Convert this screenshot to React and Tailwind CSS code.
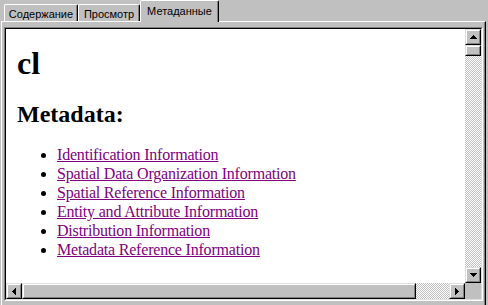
import React from "react";

const Raised = ({ className = "", children }) => (
  <div className={`border border-t-[#dfdfdf] border-l-[#dfdfdf] border-r-black border-b-black ${className}`}>
    <div className="w-full h-full border border-t-white border-l-white border-r-[#808080] border-b-[#808080] bg-[#c0c0c0] flex items-center justify-center">
      {children}
    </div>
  </div>
);

const ArrowUp = () => (
  <svg width="7" height="4" viewBox="0 0 7 4" shapeRendering="crispEdges">
    <path d="M3 0h1v1H3z M2 1h3v1H2z M1 2h5v1H1z M0 3h7v1H0z" fill="#000" />
  </svg>
);
const ArrowDown = () => (
  <svg width="7" height="4" viewBox="0 0 7 4" shapeRendering="crispEdges">
    <path d="M0 0h7v1H0z M1 1h5v1H1z M2 2h3v1H2z M3 3h1v1H3z" fill="#000" />
  </svg>
);
const ArrowLeft = () => (
  <svg width="4" height="7" viewBox="0 0 4 7" shapeRendering="crispEdges">
    <path d="M0 3h1v1H0z M1 2h1v3H1z M2 1h1v5H2z M3 0h1v7H3z" fill="#000" />
  </svg>
);
const ArrowRight = () => (
  <svg width="4" height="7" viewBox="0 0 4 7" shapeRendering="crispEdges">
    <path d="M0 0h1v7H0z M1 1h1v5H1z M2 2h1v3H2z M3 3h1v1H3z" fill="#000" />
  </svg>
);

const links = [
  "Identification Information",
  "Spatial Data Organization Information",
  "Spatial Reference Information",
  "Entity and Attribute Information",
  "Distribution Information",
  "Metadata Reference Information",
];

export default function App() {
  return (
    <div className="w-[488px] h-[305px] bg-[#c0c0c0] overflow-hidden flex flex-col pl-[1px] font-['Liberation_Sans',Arial,sans-serif] text-[11px] leading-[13px] text-black">
      {/* Tabs */}
      <div className="h-[21px] flex items-end pl-[3px] shrink-0">
        <div className="w-[74px] h-[17px] border-t border-l border-t-white border-l-white border-r border-r-black shadow-[inset_-1px_0_#808080] rounded-tl-[2px] rounded-tr-[2px] flex justify-center pt-[3px]">
          Содержание
        </div>
        <div className="w-[62px] h-[17px] border-t border-l border-t-white border-l-white border-r border-r-black shadow-[inset_-1px_0_#808080] rounded-tl-[2px] rounded-tr-[2px] flex justify-center pt-[3px]">
          Просмотр
        </div>
        <div className="relative z-10 w-[79px] h-[22px] -mb-[1px] bg-[#c0c0c0] border-t border-l border-t-white border-l-white border-r border-r-black shadow-[inset_-1px_0_#808080] rounded-tl-[2px] rounded-tr-[2px] flex justify-center pt-[4px]">
          Метаданные
        </div>
      </div>

      {/* Panel */}
      <div className="w-[485px] flex-1 border-t border-l border-white border-r border-r-black shadow-[inset_-1px_0_#808080] pt-[5px] pl-[2px]">
        {/* Sunken frame */}
        <div className="w-[479px] h-[274px] border border-t-[#808080] border-l-[#808080] border-r-white border-b-white">
          <div className="w-full h-full border border-t-black border-l-black border-r-[#dfdfdf] border-b-[#dfdfdf] flex flex-col">
            <div className="flex flex-1 min-h-0">
              {/* White content */}
              <div className="flex-1 bg-white pl-[11px] pt-[16px] font-['Liberation_Serif','Times_New_Roman',serif] overflow-hidden">
                <h1 className="text-[32px] leading-[37px] font-bold">cl</h1>
                <h2 className="text-[24px] leading-[28px] font-bold mt-[18px]">Metadata:</h2>
                <ul className="mt-[17px] text-[16px] leading-[19px]">
                  {links.map((t) => (
                    <li key={t} className="flex items-center">
                      <span className="w-[24px] shrink-0"></span>
                      <span className="w-[5px] h-[5px] rounded-full bg-black shrink-0 mt-[2px]"></span>
                      <span className="w-[11px] shrink-0"></span>
                      <a className="text-[#800080] underline tracking-[-0.2px] whitespace-nowrap">{t}</a>
                    </li>
                  ))}
                </ul>
              </div>
              {/* Vertical scrollbar */}
              <div className="w-[16px] flex flex-col bg-[image:repeating-conic-gradient(#c0c0c0_0_25%,#ffffff_0_50%)] bg-[length:2px_2px]">
                <Raised className="w-[16px] h-[16px]"><ArrowUp /></Raised>
                <Raised className="w-[16px] h-[11px]" />
                <div className="flex-1" />
                <Raised className="w-[16px] h-[16px]"><ArrowDown /></Raised>
              </div>
            </div>
            {/* Horizontal scrollbar */}
            <div className="h-[16px] flex shrink-0">
              <div className="flex-1 flex bg-[image:repeating-conic-gradient(#c0c0c0_0_25%,#ffffff_0_50%)] bg-[length:2px_2px]">
                <Raised className="w-[16px] h-[16px]"><ArrowLeft /></Raised>
                <Raised className="w-[394px] h-[16px]" />
                <div className="flex-1" />
                <Raised className="w-[16px] h-[16px]"><ArrowRight /></Raised>
              </div>
              <div className="w-[16px] h-[16px] bg-[#c0c0c0]" />
            </div>
          </div>
        </div>
      </div>
    </div>
  );
}
